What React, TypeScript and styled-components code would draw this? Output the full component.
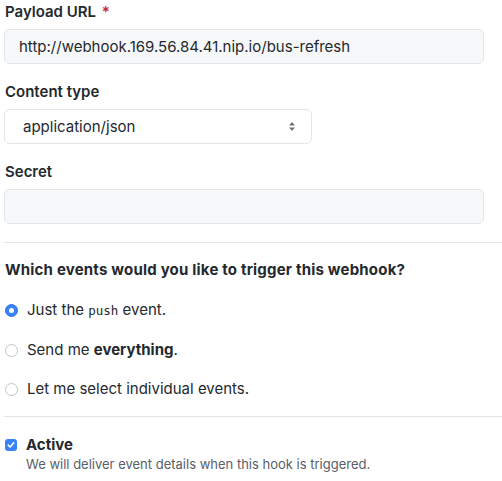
import styled, { createGlobalStyle } from 'styled-components';

const Global = createGlobalStyle`
  body {
    margin: 0;
    background: #ffffff;
    font-family: Inter, "Liberation Sans", Arial, sans-serif;
    color: #24292e;
  }
`;

const Form = styled.div`
  padding: 2px 0 0 4px;
  width: 498px;
  overflow: hidden;
`;

const Group = styled.div`
  margin-bottom: 18px;
`;

const Label = styled.div`
  font-size: 15px;
  font-weight: 600;
  line-height: 20px;
  padding-left: 1px;
  margin-bottom: 7px;
`;

const Required = styled.span`
  color: #cb2431;
  margin-left: 2px;
`;

const TextBox = styled.div<{ $width: number }>`
  box-sizing: border-box;
  width: ${({ $width }) => $width}px;
  height: 35px;
  display: flex;
  align-items: center;
  padding: 0 14px;
  background: #f6f8fa;
  border: 1px solid #e1e4e8;
  border-radius: 6px;
  font-size: 15px;
  color: #24292e;
`;

const SelectBox = styled(TextBox)`
  background: #ffffff;
  padding: 0 15px 0 18px;
  justify-content: space-between;
`;

const Divider = styled.hr`
  border: 0;
  border-top: 1px solid #e1e4e8;
  margin: 0;
`;

const Heading = styled.div`
  font-size: 15px;
  font-weight: 700;
  line-height: 20px;
  letter-spacing: 0.2px;
  padding-left: 1px;
  margin: 17px 0 20px;
`;

const Options = styled.div`
  display: flex;
  flex-direction: column;
  gap: 19px;
  margin-bottom: 17px;
`;

const OptionRow = styled.label`
  display: flex;
  align-items: center;
  gap: 9px;
  font-size: 15px;
  line-height: 20px;
`;

const Radio = styled.span<{ $on?: boolean }>`
  box-sizing: border-box;
  width: 13px;
  height: 13px;
  margin-left: 1px;
  border-radius: 50%;
  display: flex;
  align-items: center;
  justify-content: center;
  background: ${({ $on }) => ($on ? '#3a82f7' : '#ffffff')};
  border: 1px solid ${({ $on }) => ($on ? '#2f74e6' : '#c5c5c5')};
  &::after {
    content: '';
    width: 5px;
    height: 5px;
    border-radius: 50%;
    background: #ffffff;
    display: ${({ $on }) => ($on ? 'block' : 'none')};
  }
`;

const Code = styled.span`
  font-family: "DejaVu Sans Mono", "Liberation Mono", monospace;
  font-size: 12.5px;
`;

const Strong = styled.span`
  font-weight: 700;
`;

const Active = styled.div`
  margin-top: 18px;
`;

const CheckRow = styled.label`
  display: flex;
  align-items: center;
  gap: 9px;
  font-size: 15px;
  font-weight: 700;
  line-height: 20px;
`;

const Check = styled.span`
  box-sizing: border-box;
  width: 12px;
  height: 12px;
  margin-left: 1px;
  border-radius: 3px;
  background: #3a82f7;
  display: flex;
  align-items: center;
  justify-content: center;
`;

const Note = styled.div`
  font-size: 13px;
  line-height: 18px;
  color: #586069;
  padding-left: 22px;
  margin-top: 0;
`;

export default function App() {
  return (
    <>
      <Global />
      <Form>
        <Group>
          <Label>
            Payload URL <Required>*</Required>
          </Label>
          <TextBox $width={480}>http://webhook.169.56.84.41.nip.io/bus-refresh</TextBox>
        </Group>
        <Group>
          <Label>Content type</Label>
          <SelectBox $width={308}>
            <span>application/json</span>
            <svg width="8" height="11" viewBox="0 0 8 11">
              <path d="M4 1 L7 4.5 H1 Z" fill="#6a737d" />
              <path d="M4 10 L7 6.5 H1 Z" fill="#6a737d" />
            </svg>
          </SelectBox>
        </Group>
        <Group>
          <Label>Secret</Label>
          <TextBox $width={480} />
        </Group>
        <Divider />
        <Heading>Which events would you like to trigger this webhook?</Heading>
        <Options>
          <OptionRow>
            <Radio $on />
            <span>
              Just the <Code>push</Code> event.
            </span>
          </OptionRow>
          <OptionRow>
            <Radio />
            <span>
              Send me <Strong>everything</Strong>.
            </span>
          </OptionRow>
          <OptionRow>
            <Radio />
            <span>Let me select individual events.</span>
          </OptionRow>
        </Options>
        <Divider />
        <Active>
          <CheckRow>
            <Check>
              <svg width="8" height="8" viewBox="0 0 8 8">
                <path d="M1.3 4.2 L3.2 6 L6.7 1.8" stroke="#fff" strokeWidth="1.6" fill="none" strokeLinecap="round" strokeLinejoin="round" />
              </svg>
            </Check>
            Active
          </CheckRow>
          <Note>We will deliver event details when this hook is triggered.</Note>
        </Active>
      </Form>
    </>
  );
}
